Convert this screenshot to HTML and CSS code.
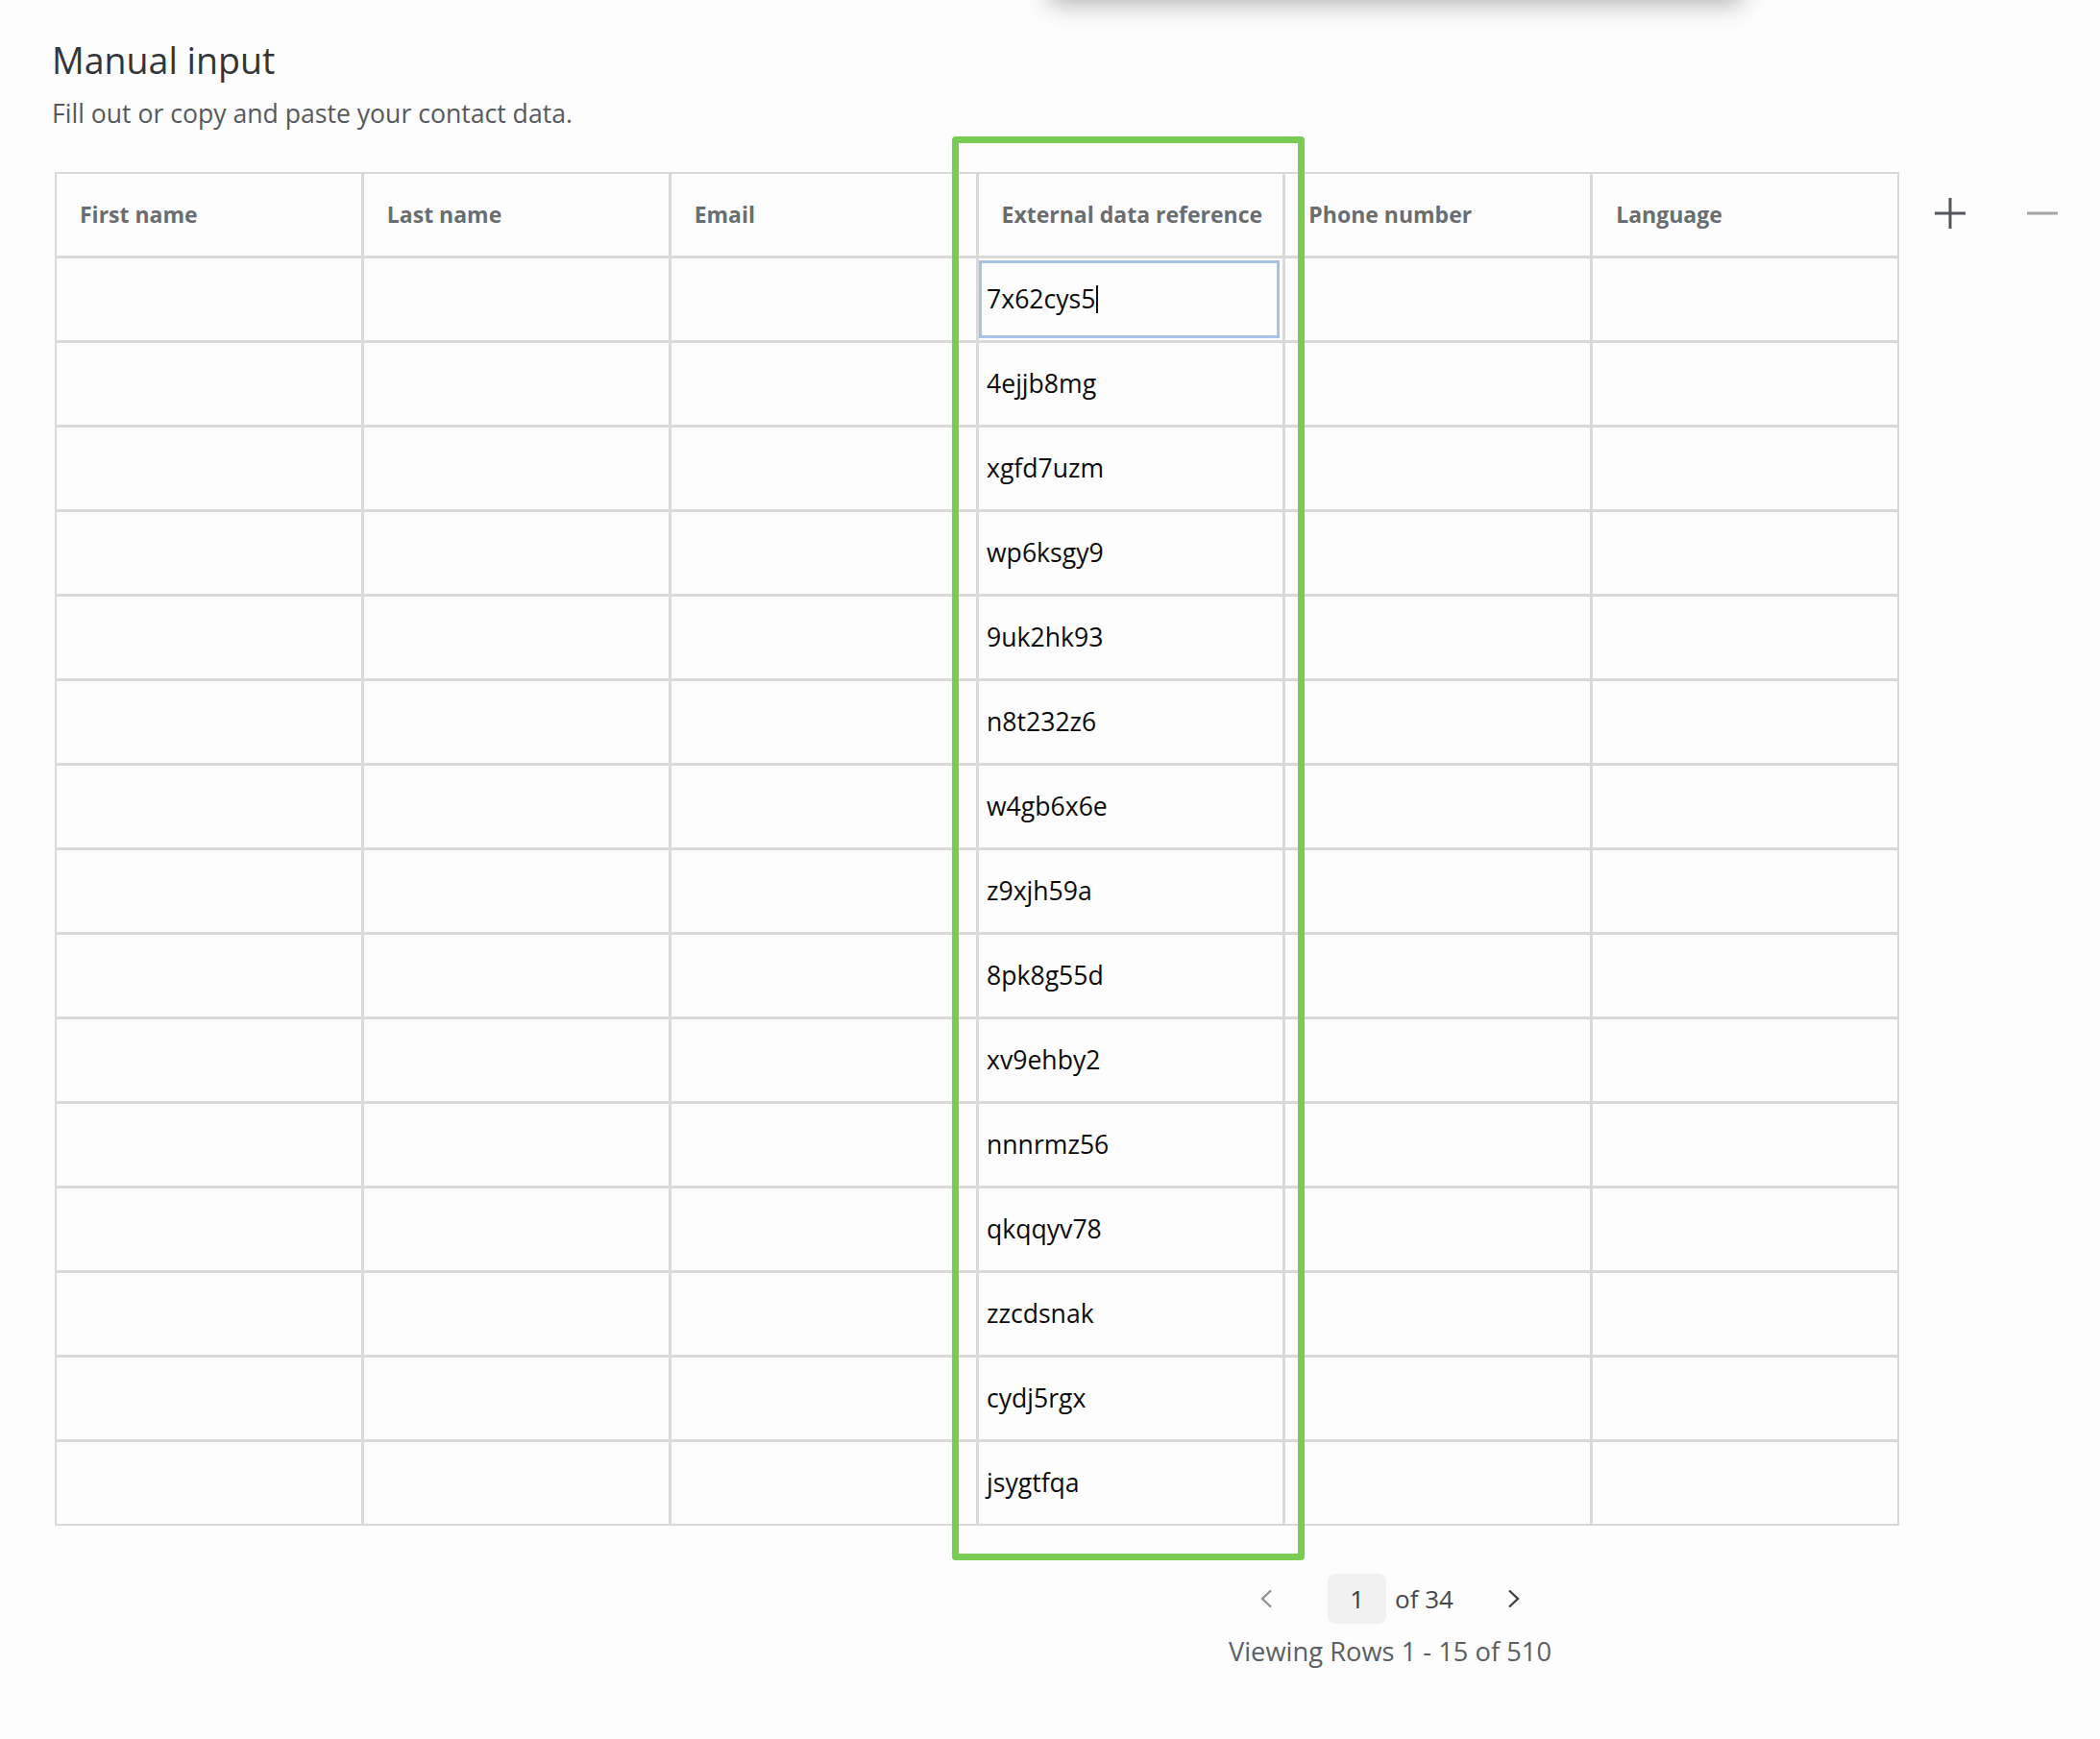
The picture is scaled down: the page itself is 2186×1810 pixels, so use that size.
FILE: index.html
```html
<!DOCTYPE html>
<html lang="en">
<head>
<meta charset="utf-8">
<title>Manual input</title>
<link rel="stylesheet" href="styles.css">
</head>
<body>
<div class="popover-shadow"></div>
<main class="page">
  <h1 class="title">Manual input</h1>
  <p class="subtitle">Fill out or copy and paste your contact data.</p>

  <div class="table-row">
    <div class="table-wrap">
      <div class="grid">
        <div class="hcell">First name</div>
        <div class="hcell">Last name</div>
        <div class="hcell">Email</div>
        <div class="hcell">External data reference</div>
        <div class="hcell">Phone number</div>
        <div class="hcell">Language</div>

        <div class="cell"></div><div class="cell"></div><div class="cell"></div>
        <div class="cell"><div class="field focused">7x62cys5<span class="caret"></span></div></div>
        <div class="cell"></div><div class="cell"></div>

        <div class="cell"></div><div class="cell"></div><div class="cell"></div>
        <div class="cell"><div class="field">4ejjb8mg</div></div>
        <div class="cell"></div><div class="cell"></div>

        <div class="cell"></div><div class="cell"></div><div class="cell"></div>
        <div class="cell"><div class="field">xgfd7uzm</div></div>
        <div class="cell"></div><div class="cell"></div>

        <div class="cell"></div><div class="cell"></div><div class="cell"></div>
        <div class="cell"><div class="field">wp6ksgy9</div></div>
        <div class="cell"></div><div class="cell"></div>

        <div class="cell"></div><div class="cell"></div><div class="cell"></div>
        <div class="cell"><div class="field">9uk2hk93</div></div>
        <div class="cell"></div><div class="cell"></div>

        <div class="cell"></div><div class="cell"></div><div class="cell"></div>
        <div class="cell"><div class="field">n8t232z6</div></div>
        <div class="cell"></div><div class="cell"></div>

        <div class="cell"></div><div class="cell"></div><div class="cell"></div>
        <div class="cell"><div class="field">w4gb6x6e</div></div>
        <div class="cell"></div><div class="cell"></div>

        <div class="cell"></div><div class="cell"></div><div class="cell"></div>
        <div class="cell"><div class="field">z9xjh59a</div></div>
        <div class="cell"></div><div class="cell"></div>

        <div class="cell"></div><div class="cell"></div><div class="cell"></div>
        <div class="cell"><div class="field">8pk8g55d</div></div>
        <div class="cell"></div><div class="cell"></div>

        <div class="cell"></div><div class="cell"></div><div class="cell"></div>
        <div class="cell"><div class="field">xv9ehby2</div></div>
        <div class="cell"></div><div class="cell"></div>

        <div class="cell"></div><div class="cell"></div><div class="cell"></div>
        <div class="cell"><div class="field">nnnrmz56</div></div>
        <div class="cell"></div><div class="cell"></div>

        <div class="cell"></div><div class="cell"></div><div class="cell"></div>
        <div class="cell"><div class="field">qkqqyv78</div></div>
        <div class="cell"></div><div class="cell"></div>

        <div class="cell"></div><div class="cell"></div><div class="cell"></div>
        <div class="cell"><div class="field">zzcdsnak</div></div>
        <div class="cell"></div><div class="cell"></div>

        <div class="cell"></div><div class="cell"></div><div class="cell"></div>
        <div class="cell"><div class="field">cydj5rgx</div></div>
        <div class="cell"></div><div class="cell"></div>

        <div class="cell"></div><div class="cell"></div><div class="cell"></div>
        <div class="cell"><div class="field">jsygtfqa</div></div>
        <div class="cell"></div><div class="cell"></div>
      </div>
      <div class="highlight"></div>
    </div>

    <div class="col-controls">
      <button class="icon-btn add" aria-label="Add column">
        <svg width="34" height="34" viewBox="0 0 34 34"><path d="M17 1v32M1 17h32" stroke="#52555a" stroke-width="3" fill="none"/></svg>
      </button>
      <button class="icon-btn remove" aria-label="Remove column">
        <svg width="34" height="34" viewBox="0 0 34 34"><path d="M1 17h32" stroke="#a3a5a8" stroke-width="3" fill="none"/></svg>
      </button>
    </div>
  </div>

  <div class="footer">
    <div class="pager">
      <span class="chev prev">
        <svg width="14" height="20" viewBox="0 0 14 20"><path d="M12 1.5L3 10l9 8.5" stroke="#8e9195" stroke-width="2.4" fill="none"/></svg>
      </span>
      <span class="page-box">1</span>
      <span class="page-of">of 34</span>
      <span class="chev next">
        <svg width="14" height="20" viewBox="0 0 14 20"><path d="M2 1.5L11 10l-9 8.5" stroke="#3f4246" stroke-width="2.4" fill="none"/></svg>
      </span>
    </div>
    <div class="viewing">Viewing Rows 1 - 15 of 510</div>
  </div>
</main>
</body>
</html>
```

FILE: styles.css
```css
html, body {
  margin: 0;
  padding: 0;
  background: #fdfdfd;
}

body {
  font-family: "Open Sans", "Noto Sans", sans-serif;
  position: relative;
  min-height: 1810px;
  overflow: hidden;
}

.popover-shadow {
  position: absolute;
  left: 1092px;
  top: -80px;
  width: 722px;
  height: 80px;
  background: #fff;
  border-radius: 8px;
  box-shadow: 0 4px 26px rgba(0, 0, 0, 0.3);
}

.page {
  padding: 37.5px 0 0 54px;
}

.title {
  margin: 0;
  font-size: 37.5px;
  line-height: 50px;
  font-weight: 400;
  color: #32363a;
}

.subtitle {
  margin: 13px 0 0 0;
  font-size: 26.6px;
  line-height: 34px;
  color: #55595e;
}

.table-row {
  display: flex;
  align-items: flex-start;
  margin-top: 44px;
  margin-left: 3px;
}

.table-wrap {
  position: relative;
  width: 1920px;
}

.grid {
  display: grid;
  grid-template-columns: repeat(6, 1fr);
  grid-auto-rows: 85px;
  gap: 3px;
  box-sizing: border-box;
  width: 1920px;
  border: 2px solid #d9d9d9;
  background: #d9d9d9;
}

.hcell {
  background: #fdfdfd;
  display: flex;
  align-items: center;
  padding-left: 24px;
  font-size: 23px;
  font-weight: 700;
  color: #6a6d70;
  white-space: nowrap;
}

.cell {
  background: #fdfdfd;
  display: flex;
}

.field {
  flex: 1;
  margin: 2px 3px 2px 0;
  border: 3px solid transparent;
  padding-left: 5.5px;
  display: flex;
  align-items: center;
  font-size: 26.6px;
  color: #0b0b0b;
  white-space: nowrap;
}

.field.focused {
  border-color: #a7c3e3;
}

.caret {
  display: inline-block;
  width: 2px;
  height: 29px;
  margin-left: 1px;
  background: #111;
}

.highlight {
  position: absolute;
  left: 934px;
  top: -37px;
  width: 367px;
  height: 1482px;
  box-sizing: border-box;
  border: 7.5px solid #78cc52;
  border-radius: 4px;
  pointer-events: none;
}

.col-controls {
  display: flex;
  align-items: center;
  height: 87px;
  margin-left: 36px;
  gap: 62px;
}

.icon-btn {
  border: 0;
  background: transparent;
  padding: 0;
  margin: 0;
  width: 34px;
  height: 34px;
  display: block;
}

.icon-btn svg {
  display: block;
}

.footer {
  margin-left: 1000px;
  width: 786px;
  margin-top: 50px;
  display: flex;
  flex-direction: column;
  align-items: center;
}

.pager {
  display: flex;
  align-items: center;
  height: 52px;
}

.chev {
  display: flex;
  align-items: center;
}

.chev svg {
  display: block;
}

.prev {
  margin-right: 57px;
}

.next {
  margin-left: 56px;
}

.page-box {
  width: 61px;
  height: 52px;
  border-radius: 8px;
  background: #f1f1f1;
  display: flex;
  align-items: center;
  justify-content: center;
  font-size: 26px;
  color: #32363a;
}

.page-of {
  margin-left: 9px;
  font-size: 26px;
  color: #45484c;
}

.viewing {
  margin-top: 11px;
  font-size: 27.3px;
  line-height: 35px;
  color: #5b5f63;
}
```
